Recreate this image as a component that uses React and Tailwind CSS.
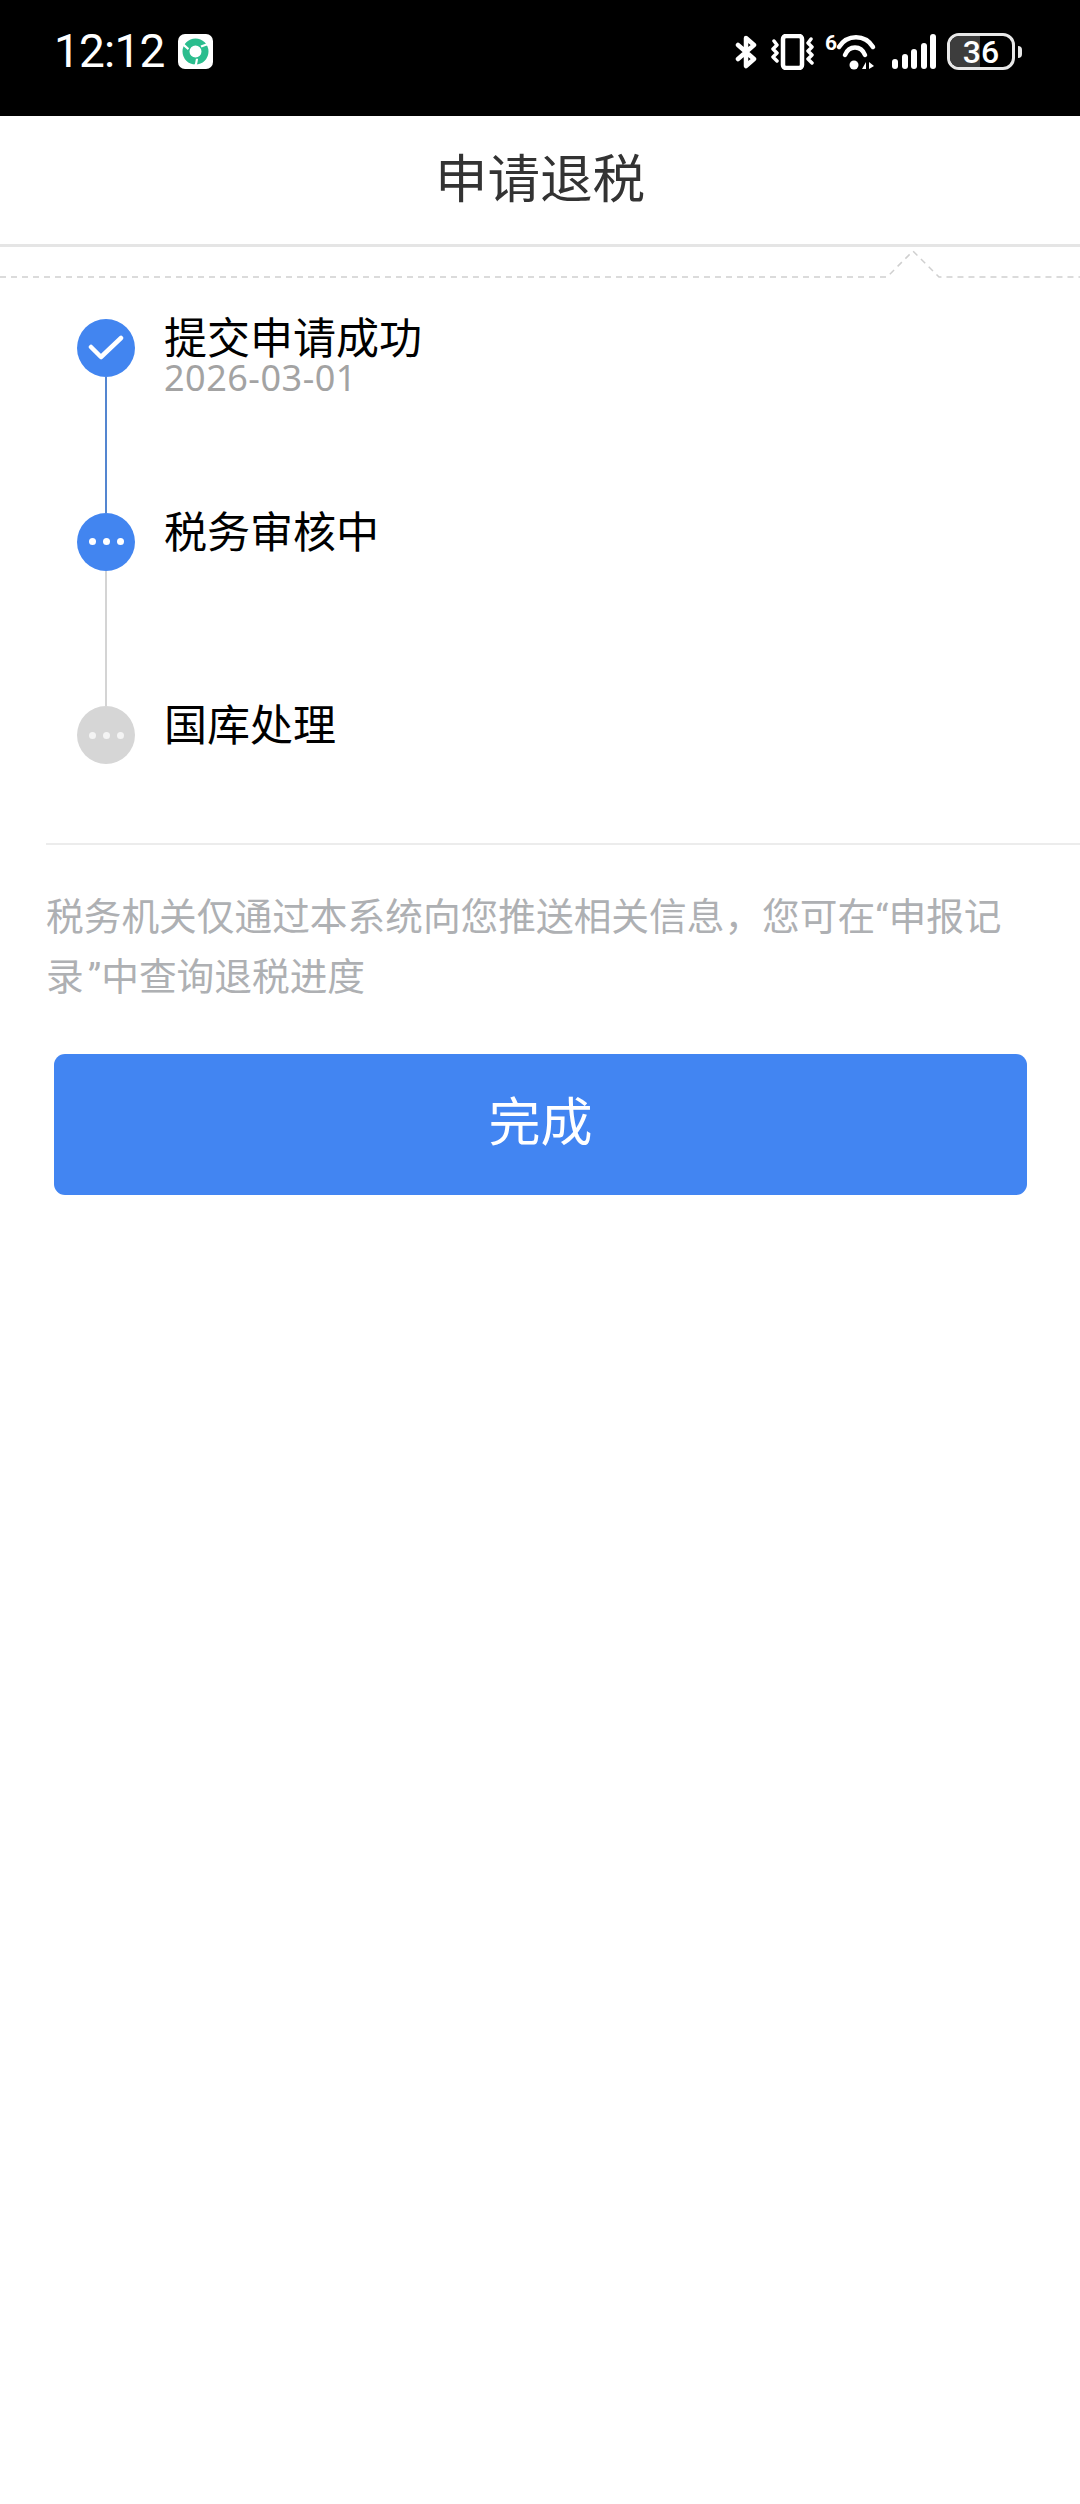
import React from 'react';

const CJK = 'font-["Noto_Sans_CJK_SC","Noto_Sans",sans-serif]';

const AppBadge = () => (
  <div className="ml-[13px] flex h-[35px] w-[35px] items-center justify-center rounded-[7px] bg-white">
    <svg width="31" height="31" viewBox="0 0 31 31" fill="none">
      <circle cx="15.5" cy="15.5" r="9.5" stroke="#2bbd8e" strokeWidth="7" />
      {[20, 140, 260].map((deg) => (
        <path key={deg} transform={`rotate(${deg} 15.5 15.5)`} d="M19 9 C22 6 25 4 29 3" stroke="#fff" strokeWidth="2.2" />
      ))}
    </svg>
  </div>
);

const Bluetooth = () => (
  <svg width="22" height="34" viewBox="0 0 22 34" fill="none" stroke="#fff" strokeWidth="4.5" strokeLinecap="round" strokeLinejoin="round">
    <path d="M3 10 L19 24 L11 31 V3 L19 10 L3 24" />
  </svg>
);

const Vibrate = () => (
  <svg width="43" height="36" viewBox="0 0 43 36" fill="none" stroke="#fff" strokeLinecap="round" strokeLinejoin="round">
    <rect x="12" y="2" width="19" height="32" rx="3" strokeWidth="4.5" />
    <path d="M3 7 L6 11 L2 15 L6 19 L2 23 L6 27" strokeWidth="3.5" />
    <path d="M40 5 L37 9 L41 13 L37 17 L41 21 L37 25 L41 29" strokeWidth="3.5" />
  </svg>
);

const Wifi = () => (
  <div className="flex items-start">
    <span className="mt-[-2px] w-[10px] font-['Roboto',sans-serif] text-[21px] leading-[22px] font-bold text-white">6</span>
    <svg width="42" height="36" viewBox="0 0 42 36" fill="none">
      <path d="M4 13 C12 0 30 0 38 13" stroke="#fff" strokeWidth="4.5" strokeLinecap="round" />
      <path d="M10 21 C14 11 26 11 30 21" stroke="#fff" strokeWidth="4.5" strokeLinecap="round" />
      <circle cx="19" cy="31" r="4.5" fill="#fff" />
      <path d="M31 28 L27 35 H31 Z M34 28 V35 L39 32 Z" fill="#fff" />
    </svg>
  </div>
);

const Signal = () => (
  <div className="ml-[4px] flex h-[35px] items-end gap-[3.5px]">
    {[10, 15, 20, 26, 35].map((h) => (
      <div key={h} className="w-[6px] rounded-full bg-white" style={{ height: h }} />
    ))}
  </div>
);

const Battery = () => (
  <div className="flex items-center gap-[3px]">
    <div className="relative flex h-[37px] w-[68px] items-center justify-center overflow-hidden rounded-[12px] border-[3px] border-[#e8e8e8]">
      <div className="absolute top-0 bottom-0 left-0 w-[30px] bg-[#3d3d3d]" />
      <span className="relative font-['Roboto',sans-serif] text-[32px] leading-none font-medium text-white">36</span>
    </div>
    <div className="h-[12px] w-[4px] rounded-r-full bg-[#e8e8e8]" />
  </div>
);

const StatusBar = () => (
  <div className="flex h-[116px] items-start justify-between bg-black pt-[33px] pr-[58px] pl-[54px]">
    <div className="flex items-center">
      <span className="font-['Roboto',sans-serif] text-[46px] leading-[37px] tracking-[-0.8px] text-white">12:12</span>
      <AppBadge />
    </div>
    <div className="flex items-center gap-[11px]">
      <div className="mr-[3px]">
        <Bluetooth />
      </div>
      <Vibrate />
      <Wifi />
      <Signal />
      <Battery />
    </div>
  </div>
);

// dashed rule with the little notch pointing up at the header
const NotchRule = () => (
  <svg className="block" width="1080" height="32" viewBox="0 0 1080 32" fill="none" stroke="#cfcfcf">
    <path d="M0 30 H887 L913 4 L939 30 H1080" strokeWidth="1.5" strokeDasharray="6 5" />
  </svg>
);

const CheckMark = () => (
  <svg width="36" height="28" viewBox="0 0 36 28" fill="none" stroke="#fff" strokeWidth="4.5" strokeLinecap="round" strokeLinejoin="round">
    <path d="M3 13 L13 23 L33 4" />
  </svg>
);

const Dots = ({ color }) => (
  <div className="flex gap-[7px]">
    {[0, 1, 2].map((i) => (
      <div key={i} className={`h-[7px] w-[7px] rounded-full ${color}`} />
    ))}
  </div>
);

const steps = [
  {
    title: '提交申请成功',
    date: '2026-03-01',
    circle: 'bg-[#4285f0]',
    line: 'bg-[#5486d0]',
    icon: <CheckMark />,
  },
  {
    title: '税务审核中',
    circle: 'bg-[#4285f0]',
    line: 'bg-[#d4d4d4]',
    icon: <Dots color="bg-white" />,
  },
  {
    title: '国库处理',
    circle: 'bg-[#d6d6d6]',
    icon: <Dots color="bg-[#f4f4f4]" />,
  },
];

const Step = ({ step }) => (
  <div className={`flex gap-[29px] ${step.line ? 'h-[193.5px]' : 'h-[57px]'}`}>
    <div className="flex w-[58px] flex-col items-center">
      <div className={`flex h-[58px] w-[58px] shrink-0 items-center justify-center rounded-full ${step.circle}`}>
        {step.icon}
      </div>
      {step.line && <div className={`w-[2px] flex-1 ${step.line} mr-[1px]`} />}
    </div>
    <div className="-mt-[9px]">
      <div className="text-[43px] leading-[50px] text-black">{step.title}</div>
      {step.date && (
        <div className="font-['Noto_Sans',sans-serif] text-[36px] leading-[36px] tracking-[0.5px] text-[#a3a3a3]">{step.date}</div>
      )}
    </div>
  </div>
);

export default function App() {
  return (
    <div className={`min-h-[2504px] bg-white ${CJK}`}>
      <StatusBar />
      <div className="flex h-[131px] items-center justify-center border-b-[3px] border-[#e5e5e5] pb-[11px]">
        <h1 className="text-[52.5px] leading-[70px] text-[#333333]">申请退税</h1>
      </div>
      <NotchRule />
      <div className="mt-[40px] pl-[77px]">
        {steps.map((step) => (
          <Step key={step.title} step={step} />
        ))}
      </div>
      <div className="mt-[80px] ml-[46px] h-[2px] bg-[#ececec]" />
      <div className="mt-[39px] pl-[46px] text-[37.7px] leading-[60px] text-[#aeb0b3]">
        <p>
          税务机关仅通过本系统向您推送相关信息，您可在<span className="font-['Roboto',sans-serif] leading-none">“</span>申报记
        </p>
        <p>
          录<span className="ml-[4px] font-['Roboto',sans-serif] leading-none">”</span>中查询退税进度
        </p>
      </div>
      <div className="mt-[50px] mr-[53px] ml-[54px] flex h-[141px] items-center justify-center rounded-[11px] bg-[#4285f2] pb-[11px]">
        <span className="text-[52px] leading-none text-white">完成</span>
      </div>
    </div>
  );
}
